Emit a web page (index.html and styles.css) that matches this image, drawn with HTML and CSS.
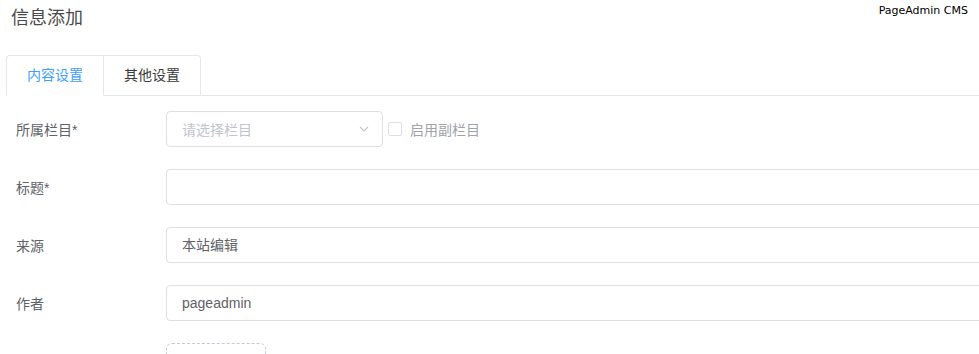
FILE: index.html
```html
<!DOCTYPE html>
<html lang="zh-CN">
<head>
    <meta charset="UTF-8">
    <meta name="viewport" content="width=device-width, initial-scale=1.0">
    <title>信息添加</title>
    <link rel="stylesheet" href="styles.css">
</head>
<body>

    <header class="page-head">
        <h1>信息添加</h1>
        <span class="brand">PageAdmin CMS</span>
    </header>

    <div class="tabs">
        <div class="tab active">内容设置</div>
        <div class="tab">其他设置</div>
        <div class="tab-rest"></div>
    </div>

    <div class="form">
        <div class="row">
            <label class="label">所属栏目*</label>
            <div class="select">
                <span class="placeholder">请选择栏目</span>
                <svg class="arrow" width="12" height="12" viewBox="0 0 12 12">
                    <path d="M2 4 L6 8 L10 4" fill="none" stroke="#c0c4cc" stroke-width="1.1"/>
                </svg>
            </div>
            <span class="check"><span class="box"></span>启用副栏目</span>
        </div>

        <div class="row">
            <label class="label">标题*</label>
            <div class="input"></div>
        </div>

        <div class="row">
            <label class="label">来源</label>
            <div class="input">本站编辑</div>
        </div>

        <div class="row">
            <label class="label">作者</label>
            <div class="input">pageadmin</div>
        </div>

        <div class="row">
            <label class="label"></label>
            <div class="upload"></div>
        </div>
    </div>

</body>
</html>
```

FILE: styles.css
```css
html, body {
    overflow: hidden;
}

body {
    margin: 0;
    padding: 0;
    font-family: "Liberation Sans", "Noto Sans CJK SC", sans-serif;
    font-size: 14px;
    color: #606266;
    background-color: white;
}

.page-head {
    display: flex;
    justify-content: space-between;
    height: 55px;
}

.page-head h1 {
    margin: 6px 0 0 11px;
    font-size: 18px;
    font-weight: normal;
    color: #4a4a4a;
    line-height: 24px;
}

.brand {
    margin: 3px 11px 0 0;
    font-family: "DejaVu Sans", sans-serif;
    font-size: 11px;
    color: #000;
    line-height: 16px;
}

.tabs {
    display: flex;
    margin-left: 6px;
    height: 41px;
}

.tab {
    box-sizing: border-box;
    width: 97px;
    height: 41px;
    line-height: 39px;
    text-align: center;
    font-size: 14px;
    color: #3a3a3a;
    border: 1px solid #e4e7ed;
    border-left: none;
    border-radius: 0 4px 0 0;
}

.tab.active {
    width: 98px;
    color: #409eff;
    border-left: 1px solid #e4e7ed;
    border-right: 1px solid #e4e7ed;
    border-bottom-color: transparent;
    border-radius: 4px 0 0 0;
}

.tab-rest {
    flex: 1;
    border-bottom: 1px solid #e4e7ed;
}

.form {
    padding-top: 15px;
    margin-right: -30px;
}

.row {
    display: flex;
    align-items: center;
    margin-bottom: 22px;
}

.label {
    width: 150px;
    padding-left: 16px;
    font-size: 14px;
    color: #606266;
    flex-shrink: 0;
}

.select {
    width: 188px;
    height: 34px;
    border: 1px solid #dcdfe6;
    border-radius: 4px;
    display: flex;
    align-items: center;
    justify-content: space-between;
    padding: 0 12px 0 15px;
}

.placeholder {
    color: #c0c4cc;
    font-size: 14px;
}

.check {
    display: flex;
    align-items: center;
    margin-left: 5px;
    font-size: 14px;
    color: #a0a3a8;
}

.box {
    width: 12px;
    height: 12px;
    border: 1px solid #dcdfe6;
    border-radius: 2px;
    margin-right: 8px;
}

.input {
    flex: 1;
    height: 34px;
    line-height: 34px;
    border: 1px solid #dcdfe6;
    border-radius: 4px;
    padding: 0 15px;
    font-size: 14px;
}

.upload {
    width: 98px;
    height: 98px;
    border: 1px dashed #c0ccda;
    border-radius: 6px;
}
```
